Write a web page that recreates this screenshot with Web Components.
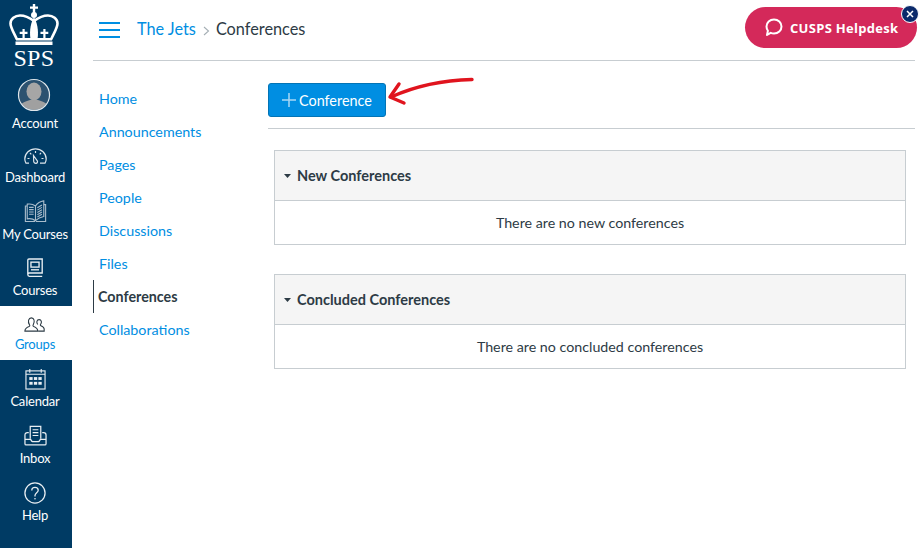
<!DOCTYPE html>
<html lang="en">
<head>
<meta charset="utf-8">
<title>Conferences</title>
<style>
  html, body { margin: 0; padding: 0; height: 100%; background: #fff; }
  body { font-family: Lato, "Open Sans", sans-serif; color: #2d3b45; overflow: hidden; }
  app-shell { height: 548px; }
</style>
</head>
<body>
<app-shell>
  <global-nav slot="nav"></global-nav>
  <page-header slot="header" group="The Jets" page="Conferences"></page-header>
  <course-menu slot="menu"></course-menu>
  <conference-list slot="content"></conference-list>
  <help-pill slot="overlay"></help-pill>
</app-shell>

<script>
const ICONS = {
  account: `<svg width="34" height="34" viewBox="0 0 34 34" style="margin-right:2px"><defs><clipPath id="c"><circle cx="17" cy="17" r="15"/></clipPath></defs><circle cx="17" cy="17" r="15" fill="#2c5270"/><g clip-path="url(#c)" fill="#a6a6a6"><ellipse cx="17" cy="13.500" rx="7.500" ry="9"/><path d="M2 34c0-8 4-10 11-12h8c7 2 11 4 11 12z" fill="#a0a0a0"/></g><circle cx="17" cy="17" r="15.500" fill="none" stroke="#dfe6ea" stroke-width="1.200"/></svg>`,
  dashboard: `<svg width="23" height="16" viewBox="0 0 23 16" fill="none" stroke="#dde6ec" stroke-width="1.200"><path d="M5 15.200H2C1.200 13.800.8 12.500.8 11 .8 5.300 5.700.8 11.500.8S22.200 5.300 22.200 11c0 1.500-.4 2.800-1.200 4.200h-5"/><path d="M9.500 7.500l3.800 5.300c.6 1 0 2.400-1.300 2.500-1.300.1-2.300-.8-2.300-2.100z"/><path d="M3.500 10.500h2M6 5l1.300 1.300M11.500 3v2M17 5l-1.300 1.300M19.500 10.500h-2"/></svg>`,
  book: `<svg width="23" height="23" viewBox="0 0 24 25" fill="none" stroke="#a9bccb" stroke-width="1.200"><path d="M12 6.500C9.500 4.500 6 4 3 4.500v16c3-.5 6.500 0 9 2 2.500-2.500 6-4 9-4.500V1c-3.500.5-7 2.500-9 5.500z"/><path d="M3 6.500H1v16.800h10.500M21 5h2v18.300H12.500M12 6.500v16"/><path d="M5 8h5M5 10.500h5M5 13h5M5 15.500h5M14 8.500l5-3M14 11l5-3M14 13.500l5-3M14 16l5-3M14 18.500l5-3"/></svg>`,
  courses: `<svg width="18" height="20" viewBox="0 0 20 22" fill="none" stroke="#e8eef2" stroke-width="1.500"><path d="M2 18V2.200C2 1.400 2.600 1 3.300 1H18v15.500H3.800C2.800 16.500 2 17.200 2 18.300s.8 2 1.800 2H18"/><rect x="5.500" y="4.500" width="9" height="5.500"/><path d="M5.500 13h9"/></svg>`,
  groups: `<svg width="22" height="15" viewBox="0 0 24 16" fill="none" stroke="#2d3b45" stroke-width="1.200"><path d="M1 15.200c0-3 2-4 4.500-5 .8-.4 1-1 .6-1.700C5 6.800 4.500 5 5 3.300 5.500 1.700 6.700.8 8 .8s2.600.9 3 2.500c.5 1.700 0 3.500-1 5.200-.4.700-.2 1.300.6 1.700 2.500 1 4.400 2 4.400 5z"/><path d="M15 8c-.8-1-1.200-2.400-.9-3.500.3-1.200 1.300-1.800 2.400-1.800s2.100.6 2.400 1.800c.3 1.100-.1 2.500-.9 3.500-.3.500-.2 1 .4 1.300 1.900.8 3.600 1.500 3.600 3.700v2.200h-6.500"/></svg>`,
  calendar: `<svg width="21" height="22" viewBox="0 0 22 22" fill="none" stroke="#e8eef2" stroke-width="1.200"><rect x="1" y="2.500" width="20" height="19"/><path d="M5 .5v4M17 .5v4M1 6h20"/><g fill="#e8eef2" stroke="none"><rect x="4.500" y="9" width="3.500" height="3"/><rect x="9.300" y="9" width="3.500" height="3"/><rect x="14" y="9" width="3.500" height="3"/><rect x="4.500" y="14" width="3.500" height="3"/><rect x="9.300" y="14" width="3.500" height="3"/><rect x="14" y="14" width="3.500" height="3"/></g></svg>`,
  inbox: `<svg width="23" height="21" viewBox="0 0 24 21" fill="none" stroke="#e8eef2" stroke-width="1.300"><path d="M6.500 14V1h11v13"/><path d="M9 4.500h6M9 7.500h6M9 10.500h6"/><path d="M5 7.500H3.500C2 7.500 1 8.500 1 10v9c0 .8.500 1.300 1.200 1.300h19.600c.7 0 1.200-.5 1.200-1.300v-9c0-1.500-1-2.500-2.500-2.500H19"/><path d="M1 14.500h6c.4 1.500 1.500 2.500 3 2.500h4c1.500 0 2.600-1 3-2.500h6"/></svg>`,
  help: `<svg width="22" height="22" viewBox="0 0 24 24" fill="none" stroke="#e8eef2" stroke-width="1.400"><circle cx="12" cy="12" r="11"/><path d="M8.500 9.200c0-2 1.500-3.400 3.500-3.400s3.500 1.300 3.500 3.200c0 2.600-3.500 3-3.500 5.800v1"/><circle cx="12" cy="18.300" r=".9" fill="#e8eef2" stroke="none"/></svg>`
};

class GlobalNav extends HTMLElement {
  constructor(){
    super();
    this.attachShadow({mode:"open"});
    // icon, label, item height, space above icon, space under icon
    const items = [
      ["account","Account",57,2,3],
      ["dashboard","Dashboard",57,15,5],
      ["book","My Courses",57,10,3],
      ["courses","Courses",59,11,4],
      ["groups","Groups",54,11,4],
      ["calendar","Calendar",57,8,3],
      ["inbox","Inbox",57,8,4],
      ["help","Help",57,8,3]
    ];
    this.shadowRoot.innerHTML = `
    <style>
      :host { display: block; width: 72px; height: 100%; background: #003b64; }
      .logo { height: 76px; box-sizing: border-box; padding: 3px 0 0 9px; }
      .sps { font: 24px/20px "Liberation Serif", serif; color: #fff; width: 50px; text-align: center; letter-spacing: 0.4px; margin-top: 2px; }
      a { display: flex; flex-direction: column; align-items: center; width: 70px; box-sizing: border-box; font-size: 13px; line-height: 16px; letter-spacing: -0.2px; white-space: nowrap; color: #fff; }
      .wrap.active { background: #fff; }
      .wrap.active a { color: #008ee2; }
      svg { display: block; flex: none; }
    </style>
    <div class="logo">
      <svg width="50" height="43" viewBox="0 0 50 43" fill="#fff">
        <path d="M23.800 1h2.400v2.500h2.800v2.200h-2.800V10h-2.400V5.700H21V3.500h2.800z"/>
        <circle cx="25" cy="12" r="3"/>
        <path d="M8 36.500C4 28 1.500 24.500 1.500 20.500c0-4.500 4.500-8 9.500-8 5.500 0 10 2.500 14 5.500 4-3 8.500-5.500 14-5.500 5 0 9.500 3.500 9.500 8 0 4-2.500 7.500-6.500 16" fill="none" stroke="#fff" stroke-width="2.600"/>
        <path d="M25 14c-2.800 5-5 13-3.500 22h7C30 27 27.800 19 25 14z"/>
        <path d="M7 35h36v2.500H7z"/>
        <path d="M13.500 26h2.200v2.700h2.800v2.200h-2.800V36h-2.200v-5.100h-2.800v-2.200h2.800zM34.300 26h2.200v2.700h2.800v2.200h-2.800V36h-2.200v-5.100h-2.800v-2.200h2.800z"/>
        <rect x="6.500" y="38.500" width="37" height="3.500"/>
      </svg>
      <div class="sps">SPS</div>
    </div>
    ${items.map(([icon,label,h,top,under]) => `
      <div class="wrap ${icon === "groups" ? "active" : ""}" style="height:${h}px;box-sizing:border-box;padding-top:${top}px">
        <a>${ICONS[icon]}<span style="margin-top:${under}px">${label}</span></a>
      </div>
    `).join("")}
    `;
  }
}

class PageHeader extends HTMLElement {
  constructor(){
    super();
    this.attachShadow({mode:"open"});
  }
  connectedCallback(){
    this.shadowRoot.innerHTML = `
    <style>
      :host { display: flex; align-items: center; height: 60px; border-bottom: 1px solid #c7cdd1; font-size: 16.3px; padding-left: 6px; }
      .burger { display: flex; flex-direction: column; gap: 5px; width: 21px; margin-right: 17px; }
      .burger i { display: block; height: 2px; background: #008ee2; }
      .crumbs { display: flex; align-items: center; padding-bottom: 3px; }
      a { color: #008ee2; }
      .sep { margin: 4px 5px 0 6px; display: flex; }
    </style>
    <div class="burger"><i></i><i></i><i></i></div>
    <div class="crumbs">
      <a>${this.getAttribute("group")}</a>
      <span class="sep"><svg width="9" height="10" viewBox="0 0 9 10" fill="none" stroke="#a5afb5" stroke-width="1.100"><path d="M2 1l4.500 4L2 9"/></svg></span>
      <span>${this.getAttribute("page")}</span>
    </div>
    `;
  }
}

class CourseMenu extends HTMLElement {
  constructor(){
    super();
    this.attachShadow({mode:"open"});
    const links = ["Home","Announcements","Pages","People","Discussions","Files","Conferences","Collaborations"];
    this.shadowRoot.innerHTML = `
    <style>
      :host { display: block; width: 175px; flex: none; padding-top: 21px; font-size: 14.3px; }
      a { display: flex; align-items: center; height: 33px; padding-left: 6px; color: #008ee2; box-sizing: border-box; }
      a.on { color: #2d3b45; font-weight: 700; border-left: 1px solid #2d3b45; padding-left: 4px; }
    </style>
    ${links.map(l => `<a class="${l === "Conferences" ? "on" : ""}">${l}</a>`).join("")}
    `;
  }
}

class ConfPanel extends HTMLElement {
  constructor(){
    super();
    this.attachShadow({mode:"open"});
  }
  connectedCallback(){
    this.shadowRoot.innerHTML = `
    <style>
      :host { display: block; border: 1px solid #c7cdd1; font-size: 14.25px; }
      header { display: flex; align-items: center; height: 49px; background: #f5f5f5; border-bottom: 1px solid #c7cdd1; padding-left: 9px; font-weight: 700; font-size: 14.5px; gap: 6px; }
      header svg { display: block; }
      .empty { height: 43px; display: flex; align-items: center; justify-content: center; }
    </style>
    <header><svg width="7" height="4" viewBox="0 0 7 4"><path d="M0 0h7L3.500 4z" fill="#2d3b45"/></svg><span>${this.getAttribute("title")}</span></header>
    <div class="empty"><slot></slot></div>
    `;
  }
}

class ConferenceList extends HTMLElement {
  constructor(){
    super();
    this.attachShadow({mode:"open"});
    this.shadowRoot.innerHTML = `
    <style>
      :host { display: block; flex: 1; padding-top: 22px; font-size: 14.3px; }
      .bar { height: 45px; border-bottom: 1px solid #c7cdd1; position: relative; }
      button { display: inline-flex; align-items: center; gap: 3px; height: 34px; width: 118px; box-sizing: border-box; padding: 0 0 0 13px; border: 1px solid #0374b5; border-radius: 3px; background: #008ee2; color: #fff; font: 14.4px Lato, sans-serif; }
      .panels { display: flex; flex-direction: column; gap: 29px; padding: 21px 9px 0 6px; }
      .arrow { position: absolute; left: 118px; top: -8px; }
    </style>
    <div class="bar">
      <button><svg width="14" height="14" viewBox="0 0 14 14" stroke="#a9d7f5" stroke-width="1.500"><path d="M7 0v14M0 7h14"/></svg>Conference</button>
      <svg class="arrow" width="90" height="36" viewBox="0 0 90 36" fill="none" stroke="#e0141e" stroke-width="3.400" stroke-linecap="round" stroke-linejoin="round"><path d="M86 4.500C65 5 34 9 5 22"/><path d="M13 9L4 22l14 6"/></svg>
    </div>
    <div class="panels">
      <conf-panel title="New Conferences">There are no new conferences</conf-panel>
      <conf-panel title="Concluded Conferences">There are no concluded conferences</conf-panel>
    </div>
    `;
  }
}

class HelpPill extends HTMLElement {
  constructor(){
    super();
    this.attachShadow({mode:"open"});
    this.shadowRoot.innerHTML = `
    <style>
      :host { position: absolute; left: 745px; top: 7px; width: 172px; height: 41px; border-radius: 21px; background: #d4295a; color: #fff; display: flex; align-items: center; gap: 7px; padding-left: 20px; box-sizing: border-box; font: 700 13px "Open Sans", sans-serif; letter-spacing: 0.3px; }
      .close { position: absolute; right: -2px; top: -2px; width: 18px; height: 18px; border-radius: 50%; background: #0b2a6b; border: 1px solid #fff; box-sizing: border-box; display: flex; align-items: center; justify-content: center; }
      svg { display: block; }
    </style>
    <svg width="18" height="19" viewBox="0 0 18 19" fill="none" stroke="#fff" stroke-width="2"><path d="M9 1.500c4.200 0 7.500 3 7.500 7s-3.300 7-7.500 7c-1.200 0-2.300-.2-3.300-.7L2 17l.9-4.200C2 11.500 1.500 10 1.500 8.500c0-4 3.300-7 7.500-7z" stroke-linejoin="round"/></svg>
    <span>CUSPS Helpdesk</span>
    <div class="close"><svg width="8" height="8" viewBox="0 0 8 8" stroke="#fff" stroke-width="1.500"><path d="M1 1l6 6M7 1L1 7"/></svg></div>
    `;
  }
}

class AppShell extends HTMLElement {
  constructor(){
    super();
    this.attachShadow({mode:"open"});
    this.shadowRoot.innerHTML = `
    <style>
      :host { display: flex; position: relative; width: 923px; }
      .nav { flex: none; width: 72px; }
      .main { flex: none; width: 822px; margin-left: 21px; display: flex; flex-direction: column; }
      .body { display: flex; flex: 1; }
    </style>
    <div class="nav"><slot name="nav"></slot></div>
    <div class="main">
      <slot name="header"></slot>
      <div class="body"><slot name="menu"></slot><slot name="content"></slot></div>
    </div>
    <slot name="overlay"></slot>
    `;
  }
}

customElements.define("global-nav", GlobalNav);
customElements.define("page-header", PageHeader);
customElements.define("course-menu", CourseMenu);
customElements.define("conf-panel", ConfPanel);
customElements.define("conference-list", ConferenceList);
customElements.define("help-pill", HelpPill);
customElements.define("app-shell", AppShell);
</script>
</body>
</html>
